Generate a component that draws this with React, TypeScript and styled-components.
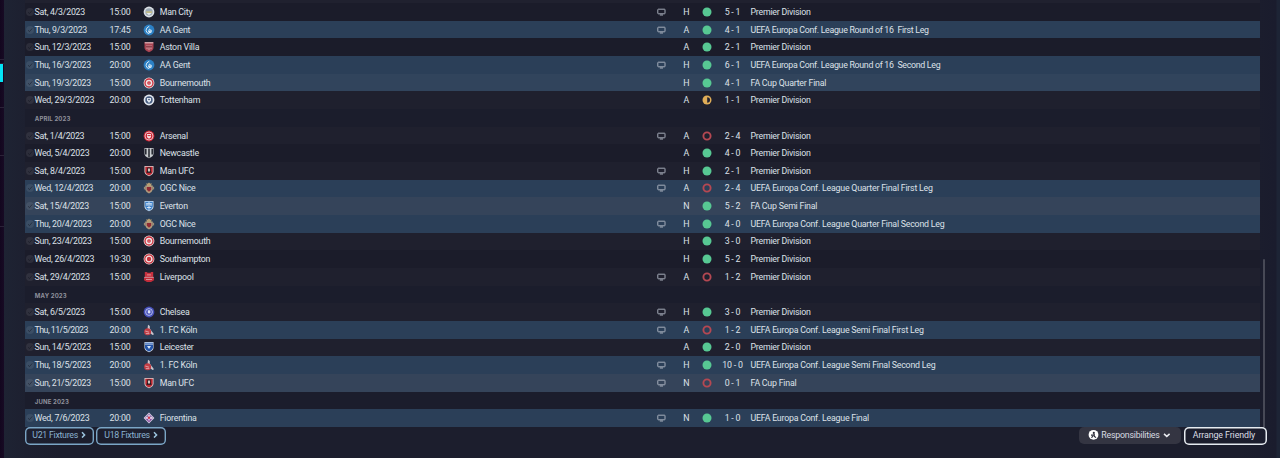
import React from 'react';
import styled, { createGlobalStyle } from 'styled-components';

const Global = createGlobalStyle`
  *{box-sizing:border-box}
  html,body{margin:0;padding:0;background:#1c1e2d;overflow:hidden}
`;

const Screen = styled.div`
  width:1280px;height:458px;overflow:hidden;display:flex;
  background:linear-gradient(90deg,#1e2333 4px,#1d2030 25px,#1c1e2d 60px,#1c1e2d 1240px,#1a1c2d 1276px,#1d2435 1277px);
  font-family:Roboto,"Liberation Sans",sans-serif;font-size:8.8px;font-stretch:94%;letter-spacing:-0.22px;color:#dde1e8;
`;
const Rail = styled.div`
  flex:none;width:4px;height:458px;display:flex;flex-direction:column;
  background:linear-gradient(90deg,#12061e,#170a24);
`;
const RailItem = styled.div<{ $h: number; $active?: boolean }>`
  flex:none;width:${p => (p.$active ? '3px' : '4px')};height:${p => p.$h}px;
  background:${p => (p.$active ? '#04e4f5' : 'transparent')};
  border-bottom:${p => (p.$active ? '0' : '1px solid #2b2238')};
`;
const Main = styled.main`flex:1;padding:0 0 0 20.5px;display:flex;flex-direction:column;min-width:0;`;
const Viewport = styled.div`display:flex;height:427px;flex:none;`;
const Table = styled.div`width:1235.5px;flex:none;display:flex;flex-direction:column;`;
const TopSliver = styled.div`height:3.1px;flex:none;background:#20212f;`;
const tones = { a: '#1f202e', b: '#1b1c2a', eu: '#2b3f58', cup: '#35445a', q: '#31445c' };
type Tone = keyof typeof tones;
const Row = styled.div<{ $tone: Tone }>`
  height:17.66px;flex:none;display:grid;align-items:center;white-space:pre;
  grid-template-columns:10px 74px 23px 11.5px 12px 4.7px 496.8px 11px 11.4px 15px 8px 10px 5.6px 30px 3px 1fr;
  background:${p => tones[p.$tone]};
`;
const Month = styled.div`
  height:17.66px;flex:none;padding:1px 0 0 10.3px;line-height:17.6px;background:#1b1d2c;
  font-family:Inter,sans-serif;font-size:6px;font-weight:700;font-stretch:100%;letter-spacing:0.13px;color:#8e909b;
`;
const Cell = styled.span<{ $col: number; $align?: string; $tight?: number }>`
  grid-column:${p => p.$col};text-align:${p => p.$align || 'left'};line-height:12px;
  ${p => (p.$tight ? `letter-spacing:${-0.22 - p.$tight}px;` : '')}
`;
const IconCell = styled.span<{ $col: number }>`grid-column:${p => p.$col};display:flex;align-items:center;justify-content:center;`;
const Track = styled.div`width:20px;padding:259px 0 0 2.5px;display:flex;`;
const Thumb = styled.div`width:2.6px;height:168px;border-radius:2px 2px 0 0;background:#474956;`;
const Footer = styled.footer`display:flex;height:18px;width:1242.5px;justify-content:space-between;`;
const Group = styled.div<{ $gap: number }>`display:flex;gap:${p => p.$gap}px;`;
const LinkButton = styled.button`
  width:69.2px;height:17.5px;border:0;box-shadow:inset 0 0 0 1.4px #7ba6c6;border-radius:5px;background:transparent;color:#8ab2d0;
  display:flex;align-items:center;justify-content:center;gap:3px;padding:0 0 2px;font:inherit;letter-spacing:-0.28px;white-space:nowrap;
`;
const SoftButton = styled.button`
  width:101.5px;height:17px;border:0;border-radius:5px;background:#343542;color:#d8dbe1;
  display:flex;align-items:center;padding:0 0 2px 8.5px;gap:2.5px;font:inherit;letter-spacing:-0.21px;
`;
const MainButton = styled.button`
  width:83.2px;height:17.7px;border:0;box-shadow:inset 0 0 0 1.5px #e6ebf0;border-radius:5px;background:transparent;color:#dcdfe5;
  padding:0 3px 2px 0;font:inherit;letter-spacing:-0.08px;
`;

const Check = () => (
  <svg width="10" height="10" viewBox="0 0 10 10"><circle cx="5" cy="5" r="4" fill="#fff" opacity=".08" /><path d="M3 5.2 4.5 6.6 7.2 3.4" fill="none" stroke="#0e101a" strokeOpacity=".45" /></svg>
);
const Tv = () => (
  <svg width="9" height="8" viewBox="0 0 9 8" fill="none" stroke="#b3bac6" strokeWidth=".9"><rect x=".8" y="1.2" width="7.2" height="4.6" rx=".5" /><path d="M2.8 7h3.2" /></svg>
);
type Outcome = 'w' | 'l' | 'd';
const Result = ({ kind }: { kind: Outcome }) => (
  <svg width="10" height="10" viewBox="0 0 10 10">
    {kind === 'w' && <circle cx="5" cy="5" r="4.5" fill="#57c893" />}
    {kind === 'l' && <circle cx="5" cy="5" r="3.6" fill="none" stroke="#b54852" strokeWidth="1.9" />}
    {kind === 'd' && <><circle cx="5" cy="5" r="4.5" fill="#e0ad58" /><path d="M5.2 2.2a2.8 2.8 0 0 1 0 5.6z" fill="#242431" /></>}
  </svg>
);

const shield = 'M1.5 1h9v5.5Q10.5 9.5 6 11.3 1.5 9.5 1.5 6.5z';
const crests: Record<string, React.ReactNode> = {
  'Man City': <><circle cx="6" cy="6" r="5.4" fill="#dadfe4" /><circle cx="6" cy="6" r="3.7" fill="#9ba9b5" /><path d="M3 5.5h6v1.2H3z" fill="#d3c477" /><path d="M3.4 7h5.2L6 9.2z" fill="#e6eaed" /></>,
  'AA Gent': <><circle cx="6" cy="6" r="5.4" fill="#2b80c5" /><path d="M6.3 2.2Q3.2 3.5 3 6.3 3.2 9 6 9.6" fill="none" stroke="#dcebf6" strokeWidth="1" /><path d="M7 2.3 6.2 5l2.5 1v2.3L6.6 9.5 5 7.5z" fill="#dcebf6" /><path d="M6.3 6.2 7.6 7" stroke="#2b80c5" strokeWidth=".8" /></>,
  'Aston Villa': <><path d={shield} fill="#a94452" /><path d="M1.8 1.2h8.4v1.2H1.8z" fill="#d4b4b9" /><path d="M4 4.2v4M6 4.2v5M8 4.2v4" stroke="#dcb9bc" strokeWidth=".8" /><path d="M3 5.8h6" stroke="#782b38" /></>,
  Bournemouth: <><circle cx="6" cy="6" r="5.4" fill="#f0e3e4" /><circle cx="6" cy="6" r="4" fill="none" stroke="#c92b38" strokeWidth="1.3" /><circle cx="6" cy="6" r="1.8" fill="#c92b38" /><circle cx="6" cy="6" r=".6" fill="#fff" /></>,
  Tottenham: <><circle cx="6" cy="6" r="5.4" fill="#dfe4ec" /><circle cx="6" cy="6" r="3.7" fill="#4a5f83" /><path d="M4 4h4v2.5L6 9 4 6.5z" fill="#e3e8ef" /><circle cx="6" cy="5.5" r=".8" fill="#35486a" /></>,
  Arsenal: <><circle cx="6" cy="6" r="5.4" fill="#ce2636" /><circle cx="6" cy="6" r="4" fill="none" stroke="#f0dfe1" strokeWidth=".8" /><path d="M4 4h4v2.5Q8 8 6 8.8 4 8 4 6.5z" fill="#f3e3e4" /><path d="M4.6 5.6h3" stroke="#ce2636" /></>,
  Newcastle: <><path d={shield} fill="#c9cccf" /><path d="M2.8 1.8v5.6M6 1.6v8.8M9.2 1.8v5.6" stroke="#20232c" strokeWidth="1.5" /></>,
  'Man UFC': <><path d={shield} fill="#dfd3d3" /><path d="M2.3 1.7h7.4v4.8Q9.7 9 6 10.5 2.3 9 2.3 6.5z" fill="#bc2730" /><path d="M4.3 2.6h3.4v3.1l1 2H3.3l1-2z" fill="#1e1a22" /><path d="M5.1 3.6h1.8v2.8H5.1z" fill="#e5d7cf" /></>,
  'OGC Nice': <><path d="M2.2 3.6h7.6v3.8Q9.2 10 6 11.4 2.8 10 2.2 7.4z" fill="#b09a7c" /><path d="M3.8 4.9h4.4v2.8L6 9.8 3.8 7.7z" fill="#8f2b34" /><path d="m3.4 1 1.2.8L6 .4l1.4 1.4 1.2-.8-.4 3H3.8z" fill="#b9a074" /><path d="M1.4 4.8v2.6M10.6 4.8v2.6" stroke="#b8a285" strokeWidth=".9" /></>,
  Everton: <><path d={shield} fill="#c6ddf3" /><path d="M2.2 1.7h7.6v4.8Q9.5 9 6 10.5 2.5 9 2.2 6.5z" fill="#3c7fc7" /><path d="M6 2v8M3.2 3.8h5.6M3.8 7.5h4.4M4 3v3M8 3v3" stroke="#dceaf7" strokeWidth=".9" /></>,
  Southampton: <><circle cx="6" cy="6" r="5.4" fill="#f3e6e6" /><circle cx="6" cy="6" r="4.2" fill="none" stroke="#c6303b" strokeWidth="1.2" /><circle cx="6" cy="6" r="2.2" fill="#c6303b" /></>,
  Liverpool: <><path d="M1.8 1h2.4v.8h3.6V1h2.4v5.4H1.8z" fill="#c93240" /><path d="M1 6.6h10v2.6L8 11H4L1 9.2z" fill="#c32c3a" /><path d="M1.2 6.4h9.6M3 8.5h6M4 3.9h4" stroke="#e5b8bc" strokeWidth=".7" /></>,
  Chelsea: <><circle cx="6" cy="6" r="5.4" fill="#454fb8" /><circle cx="6" cy="6" r="3.4" fill="none" stroke="#c2caf0" strokeWidth=".9" /><path d="M4.8 4.2h2.6v2L6 8 4.8 6.2z" fill="#dce2f7" /></>,
  '1. FC Köln': <><path d="M5 .8 6.8 2 6.8 4.5 8.6 7l2.4 3.3-1.4 .8L6.8 9 4.4 6z" fill="#c9c5cd" /><circle cx="4.6" cy="7.8" r="3.5" fill="#c23c44" /><path d="M2.2 7 6 8.2M2.8 9.6h3.5" stroke="#f0dfe0" strokeWidth=".6" /></>,
  Leicester: <><path d={shield} fill="#dce7f5" /><path d="M2 3.6h8v3Q9.7 9 6 10.6 2.3 9 2 6.6z" fill="#2454a8" /><path d="M2 1.7h8v1H2z" fill="#3464b5" /><path d="M4 5h4L6 8z" fill="#d9e6f5" /></>,
  Fiorentina: <><path d="M6 .6 11.4 6 6 11.4.6 6z" fill="#d9cbe2" /><path d="M6 1.8 10 5.8H2z" fill="#9273b2" /><path d="M2.3 6.4h7.4L6 10.2z" fill="#84489d" /><path d="M6 3v5.5M3 5.8h6" stroke="#f4e9ef" strokeWidth="1.3" /><circle cx="6" cy="5.8" r="1.2" fill="#cf354a" /></>,
};

type Fixture = [string, string, string, boolean, string, Outcome, string, string, Tone];
const PL = 'Premier Division';
const EU = 'UEFA Europa Conf. League ';
const list: (Fixture | string)[] = [
  ['Sat, 4/3/2023', '15:00', 'Man City', true, 'H', 'w', '5 - 1', PL, 'b'],
  ['Thu, 9/3/2023', '17:45', 'AA Gent', true, 'A', 'w', '4 - 1', EU + 'Round of 16  First Leg', 'eu'],
  ['Sun, 12/3/2023', '15:00', 'Aston Villa', false, 'A', 'w', '2 - 1', PL, 'b'],
  ['Thu, 16/3/2023', '20:00', 'AA Gent', true, 'H', 'w', '6 - 1', EU + 'Round of 16  Second Leg', 'eu'],
  ['Sun, 19/3/2023', '15:00', 'Bournemouth', false, 'H', 'w', '4 - 1', 'FA Cup Quarter Final', 'q'],
  ['Wed, 29/3/2023', '20:00', 'Tottenham', false, 'A', 'd', '1 - 1', PL, 'a'],
  'APRIL 2023',
  ['Sat, 1/4/2023', '15:00', 'Arsenal', true, 'A', 'l', '2 - 4', PL, 'a'],
  ['Wed, 5/4/2023', '20:00', 'Newcastle', false, 'A', 'w', '4 - 0', PL, 'b'],
  ['Sat, 8/4/2023', '15:00', 'Man UFC', true, 'H', 'w', '2 - 1', PL, 'a'],
  ['Wed, 12/4/2023', '20:00', 'OGC Nice', true, 'A', 'l', '2 - 4', EU + 'Quarter Final First Leg', 'eu'],
  ['Sat, 15/4/2023', '15:00', 'Everton', false, 'N', 'w', '5 - 2', 'FA Cup Semi Final', 'cup'],
  ['Thu, 20/4/2023', '20:00', 'OGC Nice', true, 'H', 'w', '4 - 0', EU + 'Quarter Final Second Leg', 'eu'],
  ['Sun, 23/4/2023', '15:00', 'Bournemouth', false, 'H', 'w', '3 - 0', PL, 'a'],
  ['Wed, 26/4/2023', '19:30', 'Southampton', false, 'H', 'w', '5 - 2', PL, 'b'],
  ['Sat, 29/4/2023', '15:00', 'Liverpool', true, 'A', 'l', '1 - 2', PL, 'a'],
  'MAY 2023',
  ['Sat, 6/5/2023', '15:00', 'Chelsea', true, 'H', 'w', '3 - 0', PL, 'a'],
  ['Thu, 11/5/2023', '20:00', '1. FC Köln', true, 'A', 'l', '1 - 2', EU + 'Semi Final First Leg', 'eu'],
  ['Sun, 14/5/2023', '15:00', 'Leicester', false, 'A', 'w', '2 - 0', PL, 'a'],
  ['Thu, 18/5/2023', '20:00', '1. FC Köln', true, 'H', 'w', '10 - 0', EU + 'Semi Final Second Leg', 'eu'],
  ['Sun, 21/5/2023', '15:00', 'Man UFC', true, 'N', 'l', '0 - 1', 'FA Cup Final', 'cup'],
  'JUNE 2023',
  ['Wed, 7/6/2023', '20:00', 'Fiorentina', true, 'N', 'w', '1 - 0', EU + 'Final', 'eu'],
];

const dateTightness = (date: string) => {
  const ones = date.split('1').length - 1;
  return ones === 0 ? 0.03 : ones === 1 ? 0.09 : 0.3;
};

const Chevron = () => (
  <svg width="5" height="7" viewBox="0 0 5 7"><path d="m1 1.2 2.6 2.7L1 6.6" fill="none" stroke="#9cc4df" strokeWidth="1.5" /></svg>
);

export default function App() {
  return (
    <>
      <Global />
      <Screen>
        <Rail>
          <RailItem $h={60} /><RailItem $h={4} /><RailItem $h={18} $active /><RailItem $h={26} /><RailItem $h={48} /><RailItem $h={71} />
        </Rail>
        <Main>
          <Viewport>
            <Table>
              <TopSliver />
              {list.map((f, i) =>
                typeof f === 'string' ? <Month key={i}>{f}</Month> : (
                  <Row key={i} $tone={f[8]}>
                    <IconCell $col={1}><Check /></IconCell>
                    <Cell $col={2} $tight={dateTightness(f[0])}>{f[0]}</Cell>
                    <Cell $col={3} $align="center">{f[1]}</Cell>
                    <IconCell $col={5}><svg width="12" height="12" viewBox="0 0 12 12">{crests[f[2]]}</svg></IconCell>
                    <Cell $col={7}>{f[2]}</Cell>
                    <IconCell $col={8}>{f[3] && <Tv />}</IconCell>
                    <Cell $col={10} $align="center">{f[4]}</Cell>
                    <IconCell $col={12}><Result kind={f[5]} /></IconCell>
                    <Cell $col={14} $align="center">{f[6]}</Cell>
                    <Cell $col={16} $tight={f[7].includes('16') ? 0.075 : 0}>{f[7]}</Cell>
                  </Row>
                ))}
            </Table>
            <Track><Thumb /></Track>
          </Viewport>
          <Footer>
            <Group $gap={2.8}>
              <LinkButton>U21 Fixtures<Chevron /></LinkButton>
              <LinkButton>U18 Fixtures<Chevron /></LinkButton>
            </Group>
            <Group $gap={3}>
              <SoftButton>
                <svg width="11" height="11" viewBox="0 0 11 11"><circle cx="5.5" cy="5.8" r="4.9" fill="#fff" /><circle cx="5.8" cy="3.9" r="1.1" fill="#2b2c38" /><path d="M3 6.2h3.2M6.2 5v2.6M6.2 7.2 8 8.6M3.4 8.6l1.6-1.4" stroke="#2b2c38" strokeWidth="1.2" fill="none" /></svg>
                Responsibilities
                <svg width="9" height="6" viewBox="0 0 9 6"><path d="m2 1.9 2.8 2.5 2.8-2.5" fill="none" stroke="#e8eaef" strokeWidth="1.5" /></svg>
              </SoftButton>
              <MainButton>Arrange Friendly</MainButton>
            </Group>
          </Footer>
        </Main>
      </Screen>
    </>
  );
}
